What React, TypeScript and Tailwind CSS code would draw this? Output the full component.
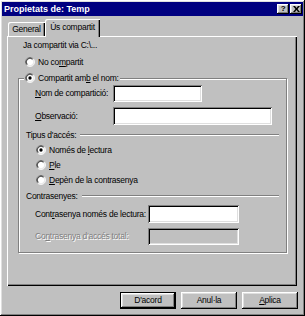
import React from "react";

const raised =
  "shadow-[inset_-1px_-1px_#000,inset_1px_1px_#fff,inset_-2px_-2px_#808080,inset_2px_2px_#dfdfdf]";
const sunken =
  "shadow-[inset_1px_1px_#808080,inset_-1px_-1px_#fff,inset_2px_2px_#000,inset_-2px_-2px_#dfdfdf]";

function Radio({ checked = false }: { checked?: boolean }) {
  return (
    <svg width="10" height="10" viewBox="0 0 12 12" className="shrink-0">
      <circle cx="6" cy="6" r="5" fill="#fff" />
      <path d="M2.1 9.9 A5.5 5.5 0 0 1 9.9 2.1" fill="none" stroke="#808080" strokeWidth="1" />
      <path d="M9.9 2.1 A5.5 5.5 0 0 1 2.1 9.9" fill="none" stroke="#fff" strokeWidth="1" />
      <path d="M2.8 9.2 A4.5 4.5 0 0 1 9.2 2.8" fill="none" stroke="#000" strokeWidth="1" />
      <path d="M9.2 2.8 A4.5 4.5 0 0 1 2.8 9.2" fill="none" stroke="#dfdfdf" strokeWidth="1" />
      {checked && <circle cx="6" cy="6" r="2" fill="#000" />}
    </svg>
  );
}

function RadioRow({
  checked,
  children,
}: {
  checked?: boolean;
  children: React.ReactNode;
}) {
  return (
    <div className="flex items-center gap-[3px] h-[12px]">
      <Radio checked={checked} />
      <span className="whitespace-nowrap">{children}</span>
    </div>
  );
}

function Field({ w, h = 17, disabled = false }: { w: number; h?: number; disabled?: boolean }) {
  return (
    <div
      className={`shrink-0 ${sunken} ${disabled ? "bg-[#c0c0c0]" : "bg-white"}`}
      style={{ width: w, height: h }}
    />
  );
}

function Heading({ children }: { children: React.ReactNode }) {
  return (
    <div className="flex items-center h-[12px] pl-[7px] pr-[7px]">
      <span className="whitespace-nowrap">{children}</span>
      <div className="flex-1 ml-[4px] h-[2px] border-t border-t-[#808080] border-b border-b-white" />
    </div>
  );
}

function Button({
  children,
  isDefault = false,
}: {
  children: React.ReactNode;
  isDefault?: boolean;
}) {
  return (
    <div
      className={`h-[17px] w-[56px] flex items-center justify-center ${
        isDefault ? "border border-black" : ""
      }`}
    >
      <div className={`w-full h-full flex items-center justify-center ${raised}`}>
        {children}
      </div>
    </div>
  );
}

export default function App() {
  return (
    <div
      className={`w-[305px] h-[316px] bg-[#c0c0c0] p-[2px] flex flex-col text-black text-[8.5px] leading-none tracking-[-0.25px] ${raised}`}
      style={{ fontFamily: '"Liberation Sans", Arial, sans-serif' }}
    >
      {/* Title bar */}
      <div className="h-[14px] bg-[#000080] flex items-center pl-[2px] pr-[1px]">
        <span className="text-white font-bold text-[9px] tracking-normal">Propietats de: Temp</span>
        <div className="ml-auto flex gap-[1px]">
          <div className={`w-[12px] h-[10px] bg-[#c0c0c0] flex items-center justify-center font-bold text-[8px] ${raised}`}>
            ?
          </div>
          <div className={`w-[12px] h-[10px] bg-[#c0c0c0] flex items-center justify-center ${raised}`}>
            <svg width="7" height="6" viewBox="0 0 7 6">
              <path d="M0 0h2l1.5 2L5 0h2L4.5 3 7 6H5L3.5 4 2 6H0l2.5-3z" fill="#000" />
            </svg>
          </div>
        </div>
      </div>

      <div className="flex-1 flex flex-col px-[5px] pt-[3px]">
        {/* Tabs */}
        <div className="flex items-end h-[17px] pl-[1px]">
          <div className="h-[14px] w-[37px] flex items-center justify-center shadow-[inset_1px_1px_#fff,inset_-1px_0_#000,inset_-2px_0_#808080] rounded-tl-[2px]">
            General
          </div>
          <div className="relative z-10 -mb-[1px] h-[18px] w-[55px] flex items-center justify-center bg-[#c0c0c0] shadow-[inset_1px_1px_#fff,inset_-1px_0_#000,inset_-2px_0_#808080] rounded-tl-[2px] pb-[2px]">
            Ús compartit
          </div>
        </div>

        {/* Panel */}
        <div className="h-[250px] w-[290px] shadow-[inset_1px_1px_#fff,inset_-1px_-1px_#000,inset_-2px_-2px_#808080] pt-[3px]">
          <div className="h-[12px] flex items-center pl-[16px]">Ja compartit via C:\...</div>
          <div className="mt-[5px] pl-[18px]">
            <RadioRow>
              No co<u>m</u>partit
            </RadioRow>
          </div>

          <div className="mt-[10px] ml-[11px] w-[269px] h-[175px] border border-[#808080] shadow-[inset_1px_1px_#fff,1px_1px_#fff]">
            <div className="-mt-[7px] ml-[5px] w-fit px-[1px] bg-[#c0c0c0]">
              <RadioRow checked>
                Compartit am<u>b</u> el nom:
              </RadioRow>
            </div>

            <div className="mt-[1px] flex items-center pl-[16px]">
              <span className="w-[78px] whitespace-nowrap">
                <u>N</u>om de compartició:
              </span>
              <Field w={89} />
            </div>
            <div className="mt-[5px] flex items-center pl-[16px]">
              <span className="w-[78px] whitespace-nowrap">
                <u>O</u>bservació:
              </span>
              <Field w={159} h={18} />
            </div>

            <div className="mt-[4px]">
              <Heading>Tipus d'accés:</Heading>
            </div>
            <div className="pl-[17px] flex flex-col gap-[3px] mt-[3px]">
              <RadioRow checked>
                Només de <u>l</u>ectura
              </RadioRow>
              <RadioRow>
                <u>P</u>le
              </RadioRow>
              <RadioRow>
                <u>D</u>epèn de la contrasenya
              </RadioRow>
            </div>

            <div className="mt-[4px]">
              <Heading>Contrasenyes:</Heading>
            </div>
            <div className="mt-[3px] flex items-center pl-[16px]">
              <span className="w-[113px] whitespace-nowrap">
                Cont<u>r</u>asenya només de lectura:
              </span>
              <Field w={91} h={18} />
            </div>
            <div className="mt-[5px] flex items-center pl-[16px]">
              <span className="w-[113px] whitespace-nowrap text-[#808080] [text-shadow:1px_1px_#fff]">
                Co<u>n</u>trasenya d'accés total:
              </span>
              <Field w={91} disabled />
            </div>
          </div>
        </div>

        {/* Buttons */}
        <div className="mt-[6px] flex justify-end gap-[5px]">
          <Button isDefault>D'acord</Button>
          <Button>Anul·la</Button>
          <Button>
            <span>
              <u>A</u>plica
            </span>
          </Button>
        </div>
      </div>
    </div>
  );
}
